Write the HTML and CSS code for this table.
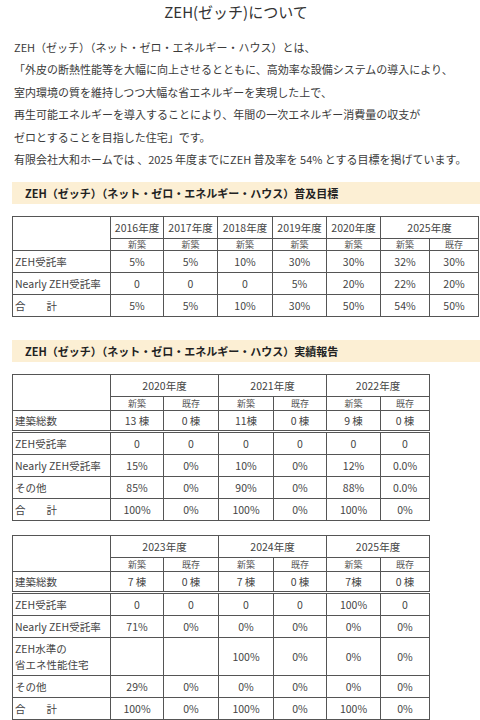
FILE: index.html
```html
<!DOCTYPE html>
<html lang="ja">
<head>
    <meta charset="UTF-8">
    <meta name="viewport" content="width=device-width, initial-scale=1.0">
    <title>ZEH(ゼッチ)について</title>
    <link rel="stylesheet" href="styles.css">
</head>
<body>
    <div class="page">
        <h1 class="title">ZEH(ゼッチ)について</h1>

        <div class="intro">
            <p>ZEH（ゼッチ）（ネット・ゼロ・エネルギー・ハウス）とは、</p>
            <p>「外皮の断熱性能等を大幅に向上させるとともに、高効率な設備システムの導入により、</p>
            <p>室内環境の質を維持しつつ大幅な省エネルギーを実現した上で、</p>
            <p>再生可能エネルギーを導入することにより、年間の一次エネルギー消費量の収支が</p>
            <p>ゼロとすることを目指した住宅」です。</p>
            <p>有限会社大和ホームでは 、2025 年度までにZEH 普及率を 54% とする目標を掲げています。</p>
        </div>

        <h2 class="band">ZEH（ゼッチ）（ネット・ゼロ・エネルギー・ハウス）普及目標</h2>

        <table class="grid goal">
            <colgroup>
                <col class="c-label">
                <col style="width:53px"><col style="width:54px"><col style="width:55px">
                <col style="width:54px"><col style="width:54px"><col style="width:49px"><col>
            </colgroup>
            <tr class="head">
                <td rowspan="2"></td>
                <td>2016年度</td><td>2017年度</td><td>2018年度</td>
                <td>2019年度</td><td>2020年度</td><td colspan="2">2025年度</td>
            </tr>
            <tr class="sub thin">
                <td>新築</td><td>新築</td><td>新築</td><td>新築</td><td>新築</td><td>新築</td><td>既存</td>
            </tr>
            <tr>
                <td class="label">ZEH受託率</td>
                <td>5%</td><td>5%</td><td>10%</td><td>30%</td><td>30%</td><td>32%</td><td>30%</td>
            </tr>
            <tr>
                <td class="label">Nearly ZEH受託率</td>
                <td>0</td><td>0</td><td>0</td><td>5%</td><td>20%</td><td>22%</td><td>20%</td>
            </tr>
            <tr>
                <td class="label">合　　計</td>
                <td>5%</td><td>5%</td><td>10%</td><td>30%</td><td>50%</td><td>54%</td><td>50%</td>
            </tr>
        </table>

        <h2 class="band">ZEH（ゼッチ）（ネット・ゼロ・エネルギー・ハウス）実績報告</h2>

        <table class="grid result">
            <colgroup>
                <col class="c-label">
                <col style="width:53px"><col style="width:55px"><col style="width:55px">
                <col style="width:53px"><col style="width:54px"><col>
            </colgroup>
            <tr class="head">
                <td rowspan="2"></td>
                <td colspan="2">2020年度</td><td colspan="2">2021年度</td><td colspan="2">2022年度</td>
            </tr>
            <tr class="sub">
                <td>新築</td><td>既存</td><td>新築</td><td>既存</td><td>新築</td><td>既存</td>
            </tr>
            <tr class="total">
                <td class="label">建築総数</td>
                <td>13 棟</td><td>0 棟</td><td>11棟</td><td>0 棟</td><td>9 棟</td><td>0 棟</td>
            </tr>
            <tr>
                <td class="label">ZEH受託率</td>
                <td>0</td><td>0</td><td>0</td><td>0</td><td>0</td><td>0</td>
            </tr>
            <tr>
                <td class="label">Nearly ZEH受託率</td>
                <td>15%</td><td>0%</td><td>10%</td><td>0%</td><td>12%</td><td>0.0%</td>
            </tr>
            <tr>
                <td class="label">その他</td>
                <td>85%</td><td>0%</td><td>90%</td><td>0%</td><td>88%</td><td>0.0%</td>
            </tr>
            <tr>
                <td class="label">合　　計</td>
                <td>100%</td><td>0%</td><td>100%</td><td>0%</td><td>100%</td><td>0%</td>
            </tr>
        </table>

        <table class="grid result">
            <colgroup>
                <col class="c-label">
                <col style="width:53px"><col style="width:55px"><col style="width:55px">
                <col style="width:53px"><col style="width:54px"><col>
            </colgroup>
            <tr class="head">
                <td rowspan="2"></td>
                <td colspan="2">2023年度</td><td colspan="2">2024年度</td><td colspan="2">2025年度</td>
            </tr>
            <tr class="sub">
                <td>新築</td><td>既存</td><td>新築</td><td>既存</td><td>新築</td><td>既存</td>
            </tr>
            <tr class="total">
                <td class="label">建築総数</td>
                <td>7 棟</td><td>0 棟</td><td>7 棟</td><td>0 棟</td><td>7棟</td><td>0 棟</td>
            </tr>
            <tr>
                <td class="label">ZEH受託率</td>
                <td>0</td><td>0</td><td>0</td><td>0</td><td>100%</td><td>0</td>
            </tr>
            <tr>
                <td class="label">Nearly ZEH受託率</td>
                <td>71%</td><td>0%</td><td>0%</td><td>0%</td><td>0%</td><td>0%</td>
            </tr>
            <tr class="tall">
                <td class="label">ZEH水準の<br>省エネ性能住宅</td>
                <td></td><td></td><td>100%</td><td>0%</td><td>0%</td><td>0%</td>
            </tr>
            <tr>
                <td class="label">その他</td>
                <td>29%</td><td>0%</td><td>0%</td><td>0%</td><td>0%</td><td>0%</td>
            </tr>
            <tr>
                <td class="label">合　　計</td>
                <td>100%</td><td>0%</td><td>100%</td><td>0%</td><td>100%</td><td>0%</td>
            </tr>
        </table>
    </div>
</body>
</html>
```

FILE: styles.css
```css
body {
    margin: 0;
    background: #fff;
    color: #3a3a3a;
    font-family: "Noto Sans CJK JP", "Noto Sans", sans-serif;
}
.page {
    padding-left: 12px;
    width: 468px;
}
.title {
    margin: 0 0 12px -12px;
    padding-right: 8px;
    font-size: 15px;
    font-weight: normal;
    line-height: 24px;
    text-align: center;
    color: #333;
}
.intro {
    padding-left: 2px;
    margin-bottom: 12px;
    font-size: 11px;
    line-height: 22.4px;
}
.intro p {
    margin: 0;
    white-space: nowrap;
}
.band {
    margin: 0 0 12px;
    padding-left: 13px;
    height: 22px;
    line-height: 22px;
    font-size: 11px;
    font-weight: bold;
    color: #222;
    background: #fcefd4;
    white-space: nowrap;
}
.grid {
    border-collapse: collapse;
    table-layout: fixed;
    font-size: 10.5px;
    color: #444;
}
.grid td {
    border: 1px solid #555;
    padding: 0;
    height: 21px;
    line-height: 14px;
    text-align: center;
    white-space: nowrap;
}
.grid .c-label {
    width: 98px;
}
.grid td.label {
    text-align: left;
    padding-left: 2px;
}
.grid .sub td {
    height: 13px;
    font-size: 9px;
    line-height: 11px;
    color: #555;
}
.grid .sub.thin td {
    height: 11px;
}
.grid .total td {
    height: 19px;
    border-bottom: 3px double #555;
}
.grid .tall td {
    height: 37px;
    line-height: 16px;
}
.goal {
    width: 467px;
    margin-bottom: 23px;
}
.result {
    width: 418px;
    margin-bottom: 14px;
}
```
